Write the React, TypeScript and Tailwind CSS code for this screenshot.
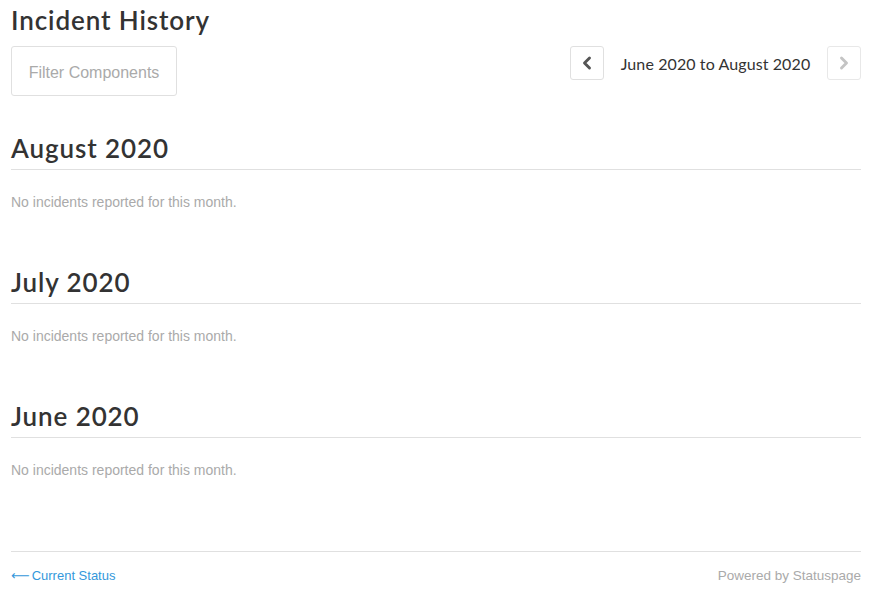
import { ChevronLeft, ChevronRight } from "lucide-react";

const months = ["August 2020", "July 2020", "June 2020"];
const heading = { fontFamily: "Lato, 'Liberation Sans', sans-serif" };

function App() {
    return (
        <div className="w-[874px] h-[594px] bg-white px-[11px] pr-[13px] text-[#333]" style={{ fontFamily: "'Liberation Sans', Arial, sans-serif" }}>
            <h1 className="text-[26px] leading-[40px] font-semibold tracking-[0.9px]" style={heading}>
                Incident History
            </h1>
            <div className="flex items-start justify-between mt-[6px]">
                <button className="w-[166px] h-[50px] border border-[#e0e0e0] rounded-[3px] text-[16px] text-[#aaa] bg-white pt-[3px]">
                    Filter Components
                </button>
                <div className="flex items-center">
                    <button className="w-[34px] h-[34px] border border-[#e0e0e0] rounded-[3px] flex items-center justify-center text-[#555]">
                        <ChevronLeft size={20} strokeWidth={3.5} />
                    </button>
                    <span className="text-[16px] text-[#333] w-[223px] text-center tracking-[0.1px] pt-[2px]" style={heading}>
                        June 2020 to August 2020
                    </span>
                    <button className="w-[34px] h-[34px] border border-[#e8e8e8] rounded-[3px] flex items-center justify-center text-[#c4c4c4]">
                        <ChevronRight size={20} strokeWidth={3.5} />
                    </button>
                </div>
            </div>
            <div className="mt-[35px]">
                {months.map((m) => (
                    <div key={m} className="h-[134px]">
                        <h2 className="text-[26px] leading-[34px] font-semibold tracking-[0.9px] pb-[4px] border-b border-[#e0e0e0]" style={heading}>
                            {m}
                        </h2>
                        <p className="text-[14px] text-[#aaa] mt-[22px]">No incidents reported for this month.</p>
                    </div>
                ))}
            </div>
            <div className="border-t border-[#e0e0e0] mt-[18px] pt-[14px] flex justify-between text-[13.5px]">
                <a className="text-[#3498db] flex items-center gap-[2px] text-[13px]">
                    <span style={{ fontFamily: "'DejaVu Sans', sans-serif" }}>⟵</span>
                    <span>Current Status</span>
                </a>
                <span className="text-[#aaa]">Powered by Statuspage</span>
            </div>
        </div>
    );
}

export default App;
